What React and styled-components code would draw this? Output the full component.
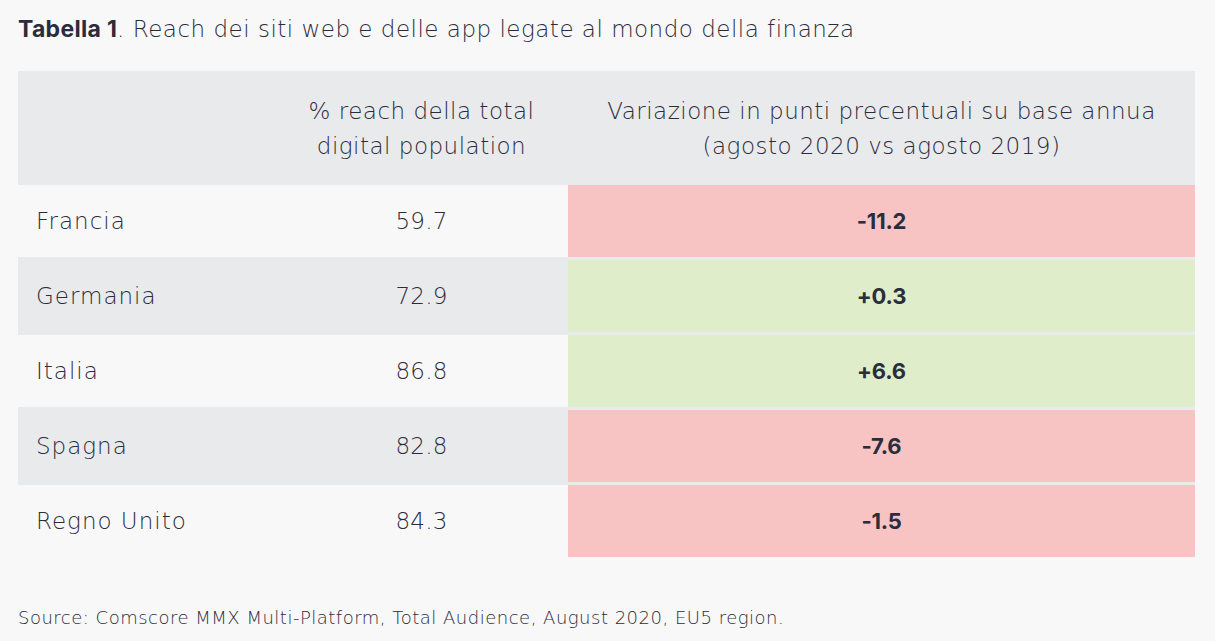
import React from "react";
import styled, { createGlobalStyle } from "styled-components";

const GlobalStyle = createGlobalStyle`
  html, body {
    margin: 0;
    padding: 0;
    background: #f8f8f8;
  }
  body {
    font-family: "DejaVu Sans", Inter, sans-serif;
    color: #2b2c3b;
  }
`;

const Page = styled.div`
  padding: 13px 20px 0 18px;
  width: 1177px;
`;

const Title = styled.h1`
  margin: 0;
  font-size: 23px;
  line-height: 32px;
  font-weight: 200;
  letter-spacing: 0.5px;
  b {
    font-family: Inter, sans-serif;
    font-size: 23px;
    font-weight: 700;
    letter-spacing: 0.3px;
  }
`;

const Table = styled.div`
  margin-top: 26px;
  display: grid;
  grid-template-columns: 257px 293px 627px;
`;

const HeadCell = styled.div`
  background: #e9eaec;
  height: 114px;
  display: flex;
  align-items: center;
  justify-content: center;
  text-align: center;
  font-size: 23px;
  line-height: 35px;
  font-weight: 200;
  letter-spacing: 0.5px;
  padding-top: 2px;
  box-sizing: border-box;
`;

const Cell = styled.div`
  background: ${({ $shade }) => ($shade ? "#e9eaec" : "#f8f8f8")};
  height: ${({ $shade }) => ($shade ? "78px" : "72px")};
  display: flex;
  align-items: center;
  justify-content: ${({ $left }) => ($left ? "flex-start" : "center")};
  padding-left: ${({ $left }) => ($left ? "18px" : "0")};
  box-sizing: border-box;
  font-size: 23px;
  font-weight: 200;
  letter-spacing: ${({ $left }) => ($left ? "1px" : "0.2px")};
`;

const Change = styled.div`
  height: ${({ $shade }) => ($shade ? "78px" : "72px")};
  border-top: ${({ $shade }) => ($shade ? "3px solid #e9eaec" : "0")};
  border-bottom: ${({ $shade }) => ($shade ? "3px solid #e9eaec" : "0")};
  background: ${({ $up }) => ($up ? "#dfedca" : "#f8c4c3")};
  box-sizing: border-box;
  display: flex;
  align-items: center;
  justify-content: center;
  font-family: Inter, sans-serif;
  font-size: 22px;
  font-weight: 700;
  letter-spacing: -0.2px;
  color: #2a2d3b;
`;

const Source = styled.p`
  margin: 49px 0 0;
  font-size: 18px;
  font-weight: 200;
  letter-spacing: 0.5px;
  line-height: 24px;
`;

const rows = [
  { country: "Francia", reach: "59.7", change: "-11.2" },
  { country: "Germania", reach: "72.9", change: "+0.3" },
  { country: "Italia", reach: "86.8", change: "+6.6" },
  { country: "Spagna", reach: "82.8", change: "-7.6" },
  { country: "Regno Unito", reach: "84.3", change: "-1.5" },
];

const App = () => {
  return (
    <>
      <GlobalStyle />
      <Page>
        <Title>
          <b>Tabella 1</b>. Reach dei siti web e delle app legate al mondo della finanza
        </Title>
        <Table>
          <HeadCell />
          <HeadCell>
            % reach della total
            <br />
            digital population
          </HeadCell>
          <HeadCell>
            Variazione in punti precentuali su base annua
            <br />
            (agosto 2020 vs agosto 2019)
          </HeadCell>
          {rows.map((row, i) => {
            const shade = i % 2 === 1;
            return (
              <React.Fragment key={row.country}>
                <Cell $shade={shade} $left>
                  {row.country}
                </Cell>
                <Cell $shade={shade}>{row.reach}</Cell>
                <Change $shade={shade} $up={row.change.startsWith("+")}>
                  {row.change}
                </Change>
              </React.Fragment>
            );
          })}
        </Table>
        <Source>
          Source: Comscore MMX Multi-Platform, Total Audience, August 2020, EU5 region.
        </Source>
      </Page>
    </>
  );
};

export default App;
